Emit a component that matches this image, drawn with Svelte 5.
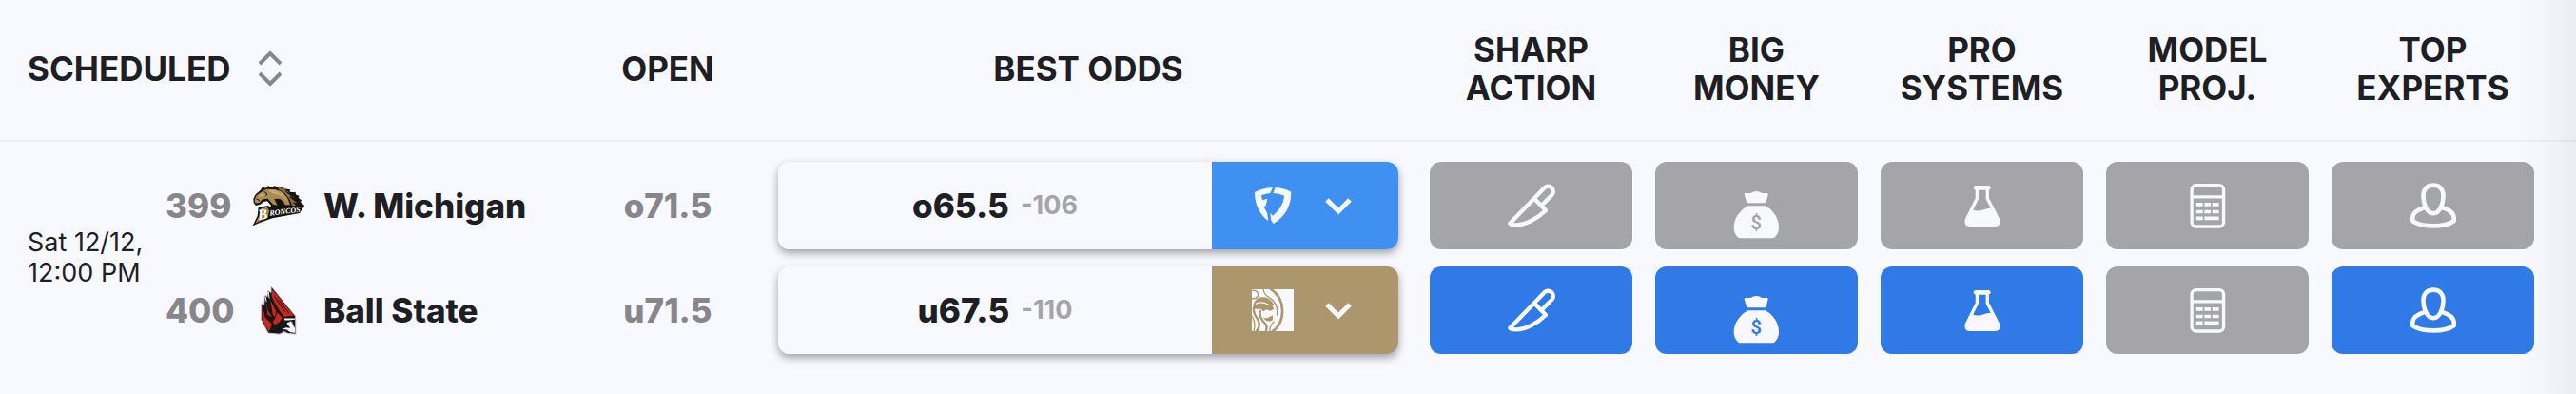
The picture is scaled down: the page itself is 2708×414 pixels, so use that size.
<!--
  OddsTable: over/under board for a game. One table row per game, with both
	sides of the total stacked inside each cell.
-->
<script lang="ts">
	type Metric = 'sharp' | 'money' | 'systems' | 'model' | 'experts';

	const metrics: { id: Metric; label: string[] }[] = [
		{ id: 'sharp', label: ['Sharp', 'Action'] },
		{ id: 'money', label: ['Big', 'Money'] },
		{ id: 'systems', label: ['Pro', 'Systems'] },
		{ id: 'model', label: ['Model', 'Proj.'] },
		{ id: 'experts', label: ['Top', 'Experts'] }
	];

	const games = [
		{
			date: 'Sat 12/12,',
			time: '12:00 PM',
			sides: [
				{
					number: 399,
					team: 'W. Michigan',
					logo: 'broncos',
					open: 'o71.5',
					line: 'o65.5',
					price: '-106',
					book: 'fanduel',
					signals: [] as Metric[]
				},
				{
					number: 400,
					team: 'Ball State',
					logo: 'cardinals',
					open: 'u71.5',
					line: 'u67.5',
					price: '-110',
					book: 'betmgm',
					signals: ['sharp', 'money', 'systems', 'experts'] as Metric[]
				}
			]
		}
	];

	let ascending = $state(true);
	const sortedGames = $derived(ascending ? games : [...games].reverse());
</script>

{#snippet teamLogo(name: string)}
	{#if name === 'broncos'}
		<svg class="team-logo" width="56" height="44" viewBox="0 0 168 132" aria-hidden="true">
			<path fill="#17130f" d="M4 45 L11 31 L26 18 L34 6 L42 11 L52 3 L57 8 L72 4 L80 9 L99 6 L101 13 L120 16 L119 23 L138 25 L137 31 L149 36 L146 41 L158 51 L151 53 L166 67 L156 74 L151 88 L64 100 L52 76 L60 66 L48 52 L36 54 L26 62 L12 66 L5 58 Z" />
			<path fill="#a88b55" d="M8 48 L14 34 L34 20 L45 14 L72 15 L94 22 L112 40 L120 64 L104 64 C100 50 86 40 70 46 L80 65 L66 62 L50 44 L34 46 L22 58 L9 58 Z" />
			<path fill="#8d6f3c" d="M82 9 L99 12 L118 26 L108 25 L134 42 L116 38 L144 59 L127 55 L139 66 L126 66 C120 43 102 23 82 14 Z" />
			<path fill="#c5ab70" d="M49 17 L72 18 L97 31 L112 52 L92 36 L63 27 Z M23 32 L37 26 L39 34 L21 42 Z" />
			<path fill="none" stroke="#17130f" stroke-width="3" d="M38 22 L48 30 L42 36 M14 45 L24 50 M92 20 C109 33 119 47 123 66 M104 20 L128 37 M120 36 L142 52" />
			<path fill="#17130f" d="M20 72 L50 66 L64 74 L164 68 L150 90 L64 106 L26 119 L2 130 L17 98 Z" />
			<path fill="#a9834b" d="M27 76 L48 71 L54 82 L50 104 L26 114 L10 122 L22 100 Z" />
			<text class="mascot-initial" x="20" y="111" transform="rotate(-8 20 111)">B</text>
			<text class="mascot-word" x="56" y="98" transform="rotate(-7 56 98)">RONCOS</text>
		</svg>
	{:else}
		<svg class="team-logo" width="40" height="53" viewBox="-1 0 120 158" aria-hidden="true">
			<path fill="#17171a" stroke="#c9c9ce" stroke-width="3" d="M35 2 L112 96 L113 153 L89 151 L75 146 L62 153 L26 150 L15 129 L3 106 L4 56 L13 61 L15 30 L23 35 L25 16 L35 22 Z" />
			<path fill="#c5281c" d="M39 13 L107 94 L75 98 L58 74 L44 50 L36 30 Z M7 62 L16 100 L38 121 L28 146 L18 128 L6 105 Z M33 46 L50 78 L48 100 L40 90 Z M19 42 L24 76 L38 100 L24 92 Z" />
			<path fill="none" stroke="#17171a" stroke-width="3" d="M46 34 L78 82 M60 46 L92 88" />
			<path fill="none" stroke="#f0f0f2" stroke-width="3" d="M27 20 L29 40 M18 36 L20 50" />
			<path fill="#c5281c" d="M54 84 L70 101 L62 114 L47 124 L40 114 L48 102 Z" />
			<path fill="#f7f7f8" d="M76 103 L110 103 L110 107 L90 109 L78 109 Z M84 118 L98 112 L110 134 L111 149 L96 147 L84 139 L70 137 L82 132 L96 134 Z" />
			<path fill="none" stroke="#8a8a8e" stroke-width="3" d="M70 142 L83 147 M100 112 L108 132" />
		</svg>
	{/if}
{/snippet}

{#snippet bookLogo(name: string)}
	{#if name === 'fanduel'}
		<svg width="44" height="44" viewBox="-6 -6 132 132" fill="currentColor" aria-hidden="true">
			<path d="M3 18 Q28 4 60 3 L52 21 Q38 22 24 28 L27 43 L43 38 L38 61 L31 63 L42 83 L46 109 C16 86 3 54 3 18 Z" />
			<path d="M68 3 Q96 5 118 17 C118 60 101 93 62 117 L55 107 L52 83 L60 92 C83 73 94 52 96 29 Q80 22 61 21 Z" />
		</svg>
	{:else}
		<svg width="44" height="44" viewBox="0 0 132 132" aria-hidden="true">
			<path fill="currentColor" d="M0 0 H132 V132 H0 Z" />
			<g class="lion-lines">
				<path d="M58 -2 C108 28 108 104 64 134" stroke-width="8" />
				<path d="M36 0 C38 12 43 20 54 26 C74 38 83 58 79 82" stroke-width="4" />
				<path d="M1 4 C12 3 20 9 21 19 L14 28 L0 30" stroke-width="5" />
				<path d="M8 53 C1 69 10 83 18 94 C27 108 24 121 14 134" stroke-width="7" />
				<path d="M27 66 C22 86 32 99 42 108 C49 116 48 124 43 134" stroke-width="7" />
				<path d="M0 84 C10 99 12 112 6 132 M70 101 C62 110 55 118 57 132" stroke-width="4" />
			</g>
			<g class="lion-fill">
				<path d="M4 50 C8 36 16 27 31 25 C48 22 64 36 72 52 L64 51 L70 62 L58 68 L46 64 L36 70 L28 62 L10 62 Z" />
				<path d="M34 86 C42 96 54 88 66 82 L66 96 C56 104 42 102 34 86 Z" />
			</g>
			<path fill="none" stroke="currentColor" stroke-width="4" d="M12 46 C26 38 40 42 52 48" />
		</svg>
	{/if}
{/snippet}

{#snippet metricIcon(id: Metric)}
	{#if id === 'sharp'}
		<svg class="line-icon" width="52" height="48" viewBox="0 0 156 144" stroke-width="13" aria-hidden="true">
			<path d="M10 128 L119 16 A16 16 0 0 1 142 39 L110 71 M87 50 L123 87 C98 112 60 133 30 133 Q12 133 10 128" />
		</svg>
	{:else if id === 'money'}
		<!-- the bag hangs low in its button, so the box has blank space on top -->
		<svg width="52" height="70" viewBox="2 -57 152 210" fill="currentColor" aria-hidden="true">
			<path d="M38 13 Q38 9 42 9 L58 9 Q76 -3 94 9 L110 9 Q114 9 113 14 L106 40 H46 Z" />
			<path d="M50 49 H104 C130 62 147 90 147 116 C147 132 140 144 130 151 H22 C12 144 5 132 5 116 C5 90 24 62 50 49 Z" />
			<text class="dollar" x="76" y="122" text-anchor="middle">$</text>
		</svg>
	{:else if id === 'systems'}
		<svg class="line-icon" width="40" height="45" viewBox="0 0 120 136" stroke-width="10" aria-hidden="true">
			<path d="M43 14 V44 L10 110 Q5 128 20 128 H100 Q115 128 110 110 L76 44 V14" />
			<path d="M39 10 H79" stroke-width="14" />
			<path fill="currentColor" stroke="none" d="M30 80 Q46 86 62 80 Q74 75 86 75 L112 114 L104 130 H16 L8 114 Z" />
		</svg>
	{:else if id === 'model'}
		<svg class="line-icon" width="40" height="49" viewBox="0 0 120 148" stroke-width="10" aria-hidden="true">
			<rect x="9" y="8" width="101" height="131" rx="14" />
			<path d="M9 45 H110" />
			<path class="keys" d="M23 69 H44 M49 69 H69 M74 69 H95 M23 92 H44 M49 92 H69 M74 92 H95 M23 113 H44 M49 113 H95" />
		</svg>
	{:else}
		<svg class="line-icon" width="52" height="50" viewBox="0 0 154 152" stroke-width="14" aria-hidden="true">
			<path d="M77 11 C55 11 45 27 45 45 C45 70 56 101 77 101 C98 101 109 70 109 45 C109 27 99 11 77 11 Z" />
			<path d="M49 82 Q11 94 11 116 V125 Q32 141 77 141 Q122 141 143 125 V116 Q143 94 105 82" />
		</svg>
	{/if}
{/snippet}

<main class="board">
	<table>
		<colgroup>
			<col />
			<col class="col-open" />
			<col class="col-odds" />
			{#each metrics as metric (metric.id)}
				<col class="col-metric" />
			{/each}
			<col class="col-end" />
		</colgroup>
		<thead>
			<tr>
				<th class="scheduled" scope="col">
					<button type="button" class="sort" onclick={() => (ascending = !ascending)}>
						Scheduled
						<svg width="28" height="40" viewBox="0 0 28 40" aria-hidden="true">
							<path d="M3 15 L14 4 L25 15 M3 25 L14 36 L25 25" />
						</svg>
					</button>
				</th>
				<th scope="col">Open</th>
				<th scope="col">Best Odds</th>
				{#each metrics as metric (metric.id)}
					<th scope="col">{metric.label[0]}<br />{metric.label[1]}</th>
				{/each}
				<td></td>
			</tr>
		</thead>
		<tbody>
			{#each sortedGames as game (game.sides[0].number)}
				<tr>
					<td class="scheduled">
						<div class="game">
							<p class="date">{game.date}<br />{game.time}</p>
							<div class="stack">
								{#each game.sides as side (side.number)}
									<div class="side team">
										<span class="number">{side.number}</span>
										<span class="logo-slot">{@render teamLogo(side.logo)}</span>
										<span>{side.team}</span>
									</div>
								{/each}
							</div>
						</div>
					</td>
					<td>
						<div class="stack">
							{#each game.sides as side (side.number)}
								<div class="side open">{side.open}</div>
							{/each}
						</div>
					</td>
					<td class="odds-cell">
						<div class="stack">
							{#each game.sides as side (side.number)}
								<div class="side odds">
									<div class="line">
										<span>{side.line}</span>
										<span class="price">{side.price}</span>
									</div>
									<button type="button" class="book {side.book}" aria-label="{side.book} odds for {side.line}">
										{@render bookLogo(side.book)}
										<svg class="chevron" width="30" height="20" viewBox="0 0 30 20" aria-hidden="true">
											<path d="M3 4 L15 16 L27 4" />
										</svg>
									</button>
								</div>
							{/each}
						</div>
					</td>
					{#each metrics as metric (metric.id)}
						<td class="metric-cell">
							<div class="stack">
								{#each game.sides as side (side.number)}
									<button
										type="button"
										class="side metric"
										class:active={side.signals.includes(metric.id)}
										aria-label="{metric.label.join(' ')} {side.line}"
									>
										{@render metricIcon(metric.id)}
									</button>
								{/each}
							</div>
						</td>
					{/each}
					<td></td>
				</tr>
			{/each}
		</tbody>
	</table>
	<div class="edge-fade"></div>
</main>

<style>
	:global(body) {
		background: #f8f9ff;
	}

	.board {
		--ink: #1e1f24;
		--paper: #f8f9ff;
		--muted: #87868b;
		--idle: #a5a4a9;
		position: relative;
		overflow: hidden;
		padding-bottom: 21px;
		background: var(--paper);
		color: var(--ink);
		font-family: Inter, 'Liberation Sans', sans-serif;
		font-size: 35px;
		line-height: 40px;
	}

	table {
		width: 100%;
		min-width: 2500px;
		table-layout: fixed;
		border-collapse: collapse;
	}

	.col-open { width: 190px; }
	.col-odds { width: 694px; }
	.col-metric { width: 237px; }
	.col-end { width: 32px; }

	th,
	td {
		padding: 0;
	}

	thead th,
	thead td {
		height: 144px;
		padding-bottom: 3px;
		border-bottom: 2px solid #ecedf2;
		font-weight: 700;
		text-align: center;
		text-transform: uppercase;
		vertical-align: middle;
	}

	tbody td {
		padding-top: 21px;
		padding-bottom: 21px;
	}

	thead th.scheduled,
	tbody td.scheduled {
		padding-left: 29px;
		text-align: left;
	}

	button {
		appearance: none;
		padding: 0;
		border: 0;
		background: none;
		color: inherit;
		font: inherit;
		text-transform: inherit;
		cursor: pointer;
	}

	.sort {
		display: flex;
		align-items: center;
		gap: 28px;
	}

	.sort path {
		fill: none;
		stroke: var(--muted);
		stroke-width: 4;
	}

	.game {
		display: flex;
		align-items: center;
	}

	.date {
		width: 145px;
		margin: 0;
		font-size: 27px;
		line-height: 32px;
		white-space: nowrap;
	}

	.stack {
		display: flex;
		flex-direction: column;
		gap: 18px;
	}

	.side {
		display: flex;
		align-items: center;
		height: 92px;
		font-weight: 800;
	}

	.team {
		gap: 19px;
	}

	.number {
		width: 72px;
		color: var(--muted);
	}

	.logo-slot {
		display: flex;
		justify-content: center;
		width: 56px;
	}

	.mascot-initial {
		fill: #fff;
		font: italic 700 46px 'Liberation Serif', serif;
	}

	.mascot-word {
		fill: #fff;
		font: italic 700 24px 'Liberation Serif', serif;
	}

	.open {
		justify-content: center;
		color: var(--muted);
	}

	tbody td.odds-cell {
		padding-right: 21px;
		padding-left: 21px;
	}

	.odds {
		border-radius: 12px;
		box-shadow: 0 4px 8px rgba(30, 28, 34, 0.4);
	}

	.line {
		display: flex;
		flex: 1;
		align-items: center;
		justify-content: center;
		gap: 12px;
		height: 100%;
		border-radius: 12px 0 0 12px;
		background: var(--paper);
	}

	.price {
		color: var(--idle);
		font-size: 27px;
		font-weight: 700;
	}

	.book {
		display: flex;
		align-items: center;
		justify-content: center;
		gap: 32px;
		width: 196px;
		height: 100%;
		padding-right: 6px;
		border-radius: 0 12px 12px 0;
		color: var(--paper);
	}

	.fanduel { background: #4090f2; }
	.betmgm { background: #ab976b; }

	.lion-lines {
		fill: none;
		stroke: #ab976b;
	}

	.lion-fill {
		fill: #ab976b;
	}

	.chevron path {
		fill: none;
		stroke: currentColor;
		stroke-width: 5;
	}

	tbody td.metric-cell {
		padding-right: 12px;
		padding-left: 12px;
	}

	.metric {
		--tile: var(--idle);
		justify-content: center;
		width: 100%;
		border-radius: 12px;
		background: var(--tile);
		color: var(--paper);
	}

	.metric.active {
		--tile: #307ae8;
	}

	.line-icon {
		fill: none;
		stroke: currentColor;
		stroke-linecap: round;
		stroke-linejoin: round;
	}

	.keys {
		stroke-width: 11;
		stroke-linecap: butt;
	}

	.dollar {
		fill: var(--tile);
		font: 600 60px Roboto, 'Liberation Sans', sans-serif;
	}

	.edge-fade {
		position: absolute;
		top: 0;
		right: 0;
		bottom: 0;
		width: 60px;
		background: linear-gradient(to right, rgba(30, 28, 34, 0), rgba(30, 28, 34, 0.02) 50%, rgba(30, 28, 34, 0.06));
		pointer-events: none;
	}
</style>
